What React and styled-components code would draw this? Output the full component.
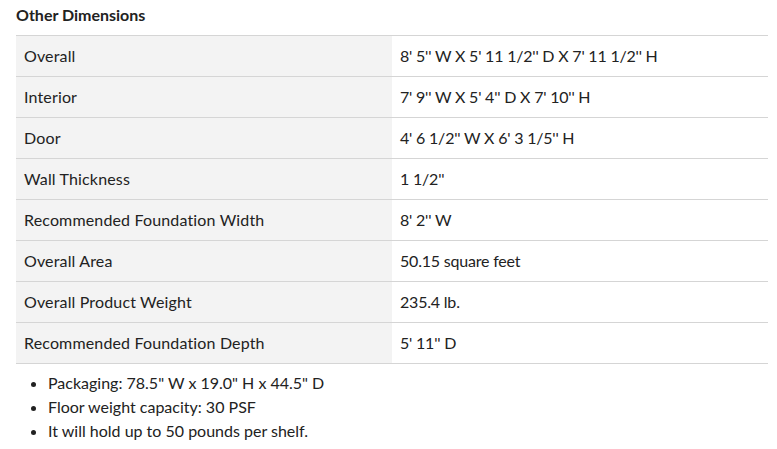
import React from 'react';
import styled, { createGlobalStyle } from 'styled-components';

const GlobalStyle = createGlobalStyle`
    body {
        margin: 0;
        background: #fff;
        font-family: Lato, "Noto Sans", sans-serif;
        color: #222;
    }
`;

const Wrapper = styled.div`
    padding: 5px 9px 0 16px;
`;

const Title = styled.h3`
    margin: 0;
    font-size: 16px;
    font-weight: 700;
    line-height: 20px;
    height: 30px;
`;

const Table = styled.div`
    border-top: 1px solid #d5d5d5;
`;

const Row = styled.div`
    display: grid;
    grid-template-columns: 376px 1fr;
    border-bottom: 1px solid #d5d5d5;
    height: 40px;
`;

const Cell = styled.div`
    display: flex;
    align-items: center;
    padding: 0 8px 2px;
    font-size: 16px;
    letter-spacing: ${props => props.shaded ? '0.15px' : '-0.2px'};
    background: ${props => props.shaded ? '#f3f3f3' : '#fff'};
`;

const List = styled.ul`
    margin: 7px 0 0;
    padding-left: 32px;
    font-size: 16px;
    line-height: 24px;
`;

const rows = [
    ['Overall', `8' 5'' W X 5' 11 1/2'' D X 7' 11 1/2'' H`],
    ['Interior', `7' 9'' W X 5' 4'' D X 7' 10'' H`],
    ['Door', `4' 6 1/2'' W X 6' 3 1/5'' H`],
    ['Wall Thickness', `1 1/2''`],
    ['Recommended Foundation Width', `8' 2'' W`],
    ['Overall Area', '50.15 square feet'],
    ['Overall Product Weight', '235.4 lb.'],
    ['Recommended Foundation Depth', `5' 11'' D`],
];

export default function App() {
    return (
        <Wrapper>
            <GlobalStyle />
            <Title>Other Dimensions</Title>
            <Table>
                {rows.map(([label, value]) => (
                    <Row key={label}>
                        <Cell shaded>{label}</Cell>
                        <Cell>{value}</Cell>
                    </Row>
                ))}
            </Table>
            <List>
                <li>Packaging: 78.5" W x 19.0" H x 44.5" D</li>
                <li>Floor weight capacity: 30 PSF</li>
                <li>It will hold up to 50 pounds per shelf.</li>
            </List>
        </Wrapper>
    );
}
